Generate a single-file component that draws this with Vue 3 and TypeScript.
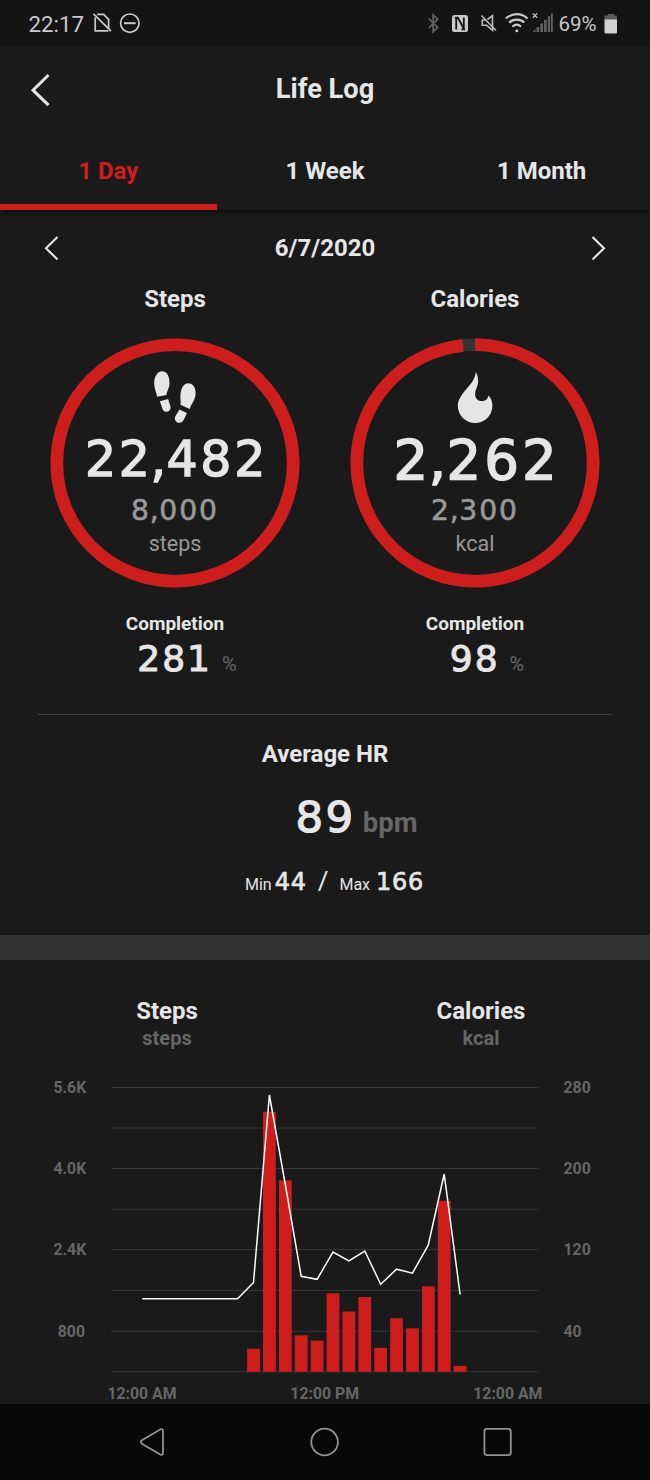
<script setup lang="ts">
interface Metric {
  title: string
  chars: string[]
  goal: string[]
  unit: string
  ratio: number
  percent: string
  kind: 'steps' | 'calories'
}

const metrics: Metric[] = [
  { title: 'Steps', chars: ['22', ',', '482'], goal: ['8', ',', '000'], unit: 'steps', ratio: 1, percent: '281', kind: 'steps' },
  { title: 'Calories', chars: ['2', ',', '262'], goal: ['2', ',', '300'], unit: 'kcal', ratio: 2262 / 2300, percent: '98', kind: 'calories' },
]
const radius = 118.2
const circumference = 2 * Math.PI * radius

const tabs = ['1 Day', '1 Week', '1 Month']

const gridLines = [27.5, 68, 108.5, 149.2, 189.5, 230.5, 271.2, 311.8]
const leftLabels = ['5.6K', '4.0K', '2.4K', '800']
const rightLabels = ['280', '200', '120', '40']
const pitch = 15.89
const firstHour = 142.3
const baseline = 311.8
// Bar heights by hour, starting at 7 AM
const bars = [23, 260, 191.5, 36.5, 31.3, 78.5, 60.3, 74.8, 24, 53.6, 43.5, 85.5, 171, 6]
const lineY = [238.7, 238.7, 238.7, 238.7, 238.7, 238.7, 238.7, 222.5, 35, 124.5, 216.3, 219.3, 192, 201, 191, 224.3, 209.2, 213.2, 185, 114, 234.5]
const linePoints = lineY.map((y, i) => `${(firstHour + i * pitch).toFixed(1)},${y}`).join(' ')
</script>

<template>
  <main class="screen">
    <div class="status">
      <span class="clock">22:17</span>
      <svg class="left-icons" width="50" height="24" viewBox="0 0 50 24">
        <g fill="none" stroke="#c9c9c9" stroke-width="1.7">
          <path d="M5.2 2.3h6.4l5 5v9M3.2 5.5v13.3h13.2M1.5 1.8L19 19.2" />
          <circle cx="37.8" cy="11.2" r="9.2" /><path d="M32 11.2h11.6" stroke-width="2" />
        </g>
      </svg>
      <span class="grow"></span>
      <svg class="right-icons" width="128" height="24" viewBox="427 12 128 24">
        <path d="M429.7 18.5l9 9-4.5 4.2V15l4.5 4.3-9 8.7" fill="none" stroke="#666" stroke-width="1.7" />
        <rect x="453" y="15" width="16" height="17" rx="2.5" fill="#c9c9c9" />
        <path d="M457.2 29.500V19l2-.8 5.600 10.400V17.500M455.800 17.700h3.600M462.500 29.300h3.600" fill="none" stroke="#141414" stroke-width="1.8" />
        <g fill="none" stroke="#bdbdbd" stroke-width="1.6">
          <path d="M482.4 15.5l14.6 15M488.500 19.5l5-3.8v11M483.3 19.8v5.5h4.3l6 5v-3.5M483.3 20h4" />
        </g>
        <g fill="none" stroke="#c9c9c9" stroke-width="2.1">
          <path d="M506.8 18.6c6.4-6 15.5-6 21.8 0M510.1 22.6c4.4-4 10.9-4 15.2 0M513.4 26.7c2.6-2.4 6-2.4 8.6 0" />
        </g>
        <circle cx="517.8" cy="30.8" r="1.5" fill="#c9c9c9" />
        <path d="M533.8 13.4l4.4 4.4M538.2 13.4l-4.4 4.4" stroke="#c9c9c9" stroke-width="1.3" />
        <path d="M533.5 32l3-3v3zM537.500 27h2.6v5h-2.6zM541.300 23.5h2.6V32h-2.6zM545.100 19.7h2.6V32h-2.6zM548.900 16h2.200V32h-2.200zM552 13.5h1.800V32H552z" fill="#636363" />
      </svg>
      <span class="battery-text">69%</span>
      <svg class="battery" width="14" height="22" viewBox="0 0 14 22">
        <path d="M4 1h6v1.5h3V7H.5V2.5H4z" fill="#595959" /><path d="M.5 6.5H13v13a1 1 0 0 1-1 1H1.500a1 1 0 0 1-1-1z" fill="#d2d2d2" />
      </svg>
    </div>

    <header class="header">
      <svg class="back" width="22" height="36" viewBox="0 0 22 36"><path d="M18.500 3L3 18.200l15.500 15" fill="none" stroke="#e6e6e6" stroke-width="3" /></svg>
      <h1>Life Log</h1>
      <span class="back"></span>
    </header>

    <nav class="tabs">
      <button v-for="(tab, i) in tabs" :key="tab" class="tab" :class="{ active: i === 0 }">{{ tab }}</button>
    </nav>

    <div class="date-row">
      <svg width="18" height="28" viewBox="0 0 18 28"><path d="M15.500 3L4 14.300l11.500 11.200" fill="none" stroke="#e6e6e6" stroke-width="2.100" /></svg>
      <strong>6/7/2020</strong>
      <svg width="18" height="28" viewBox="0 0 18 28"><path d="M2.500 3L14 14.300 2.500 25.500" fill="none" stroke="#e6e6e6" stroke-width="2.100" /></svg>
    </div>

    <section class="metrics">
      <article v-for="m in metrics" :key="m.title" class="metric" :class="m.kind">
        <h2>{{ m.title }}</h2>
        <div class="ring">
          <svg class="ring-track" width="250" height="250" viewBox="0 0 250 250">
            <circle cx="125" cy="125" :r="radius" fill="none" stroke="#333" stroke-width="12.600" />
            <circle cx="125" cy="125" :r="radius" fill="none" stroke="#cd1d1d" stroke-width="12.600"
              :stroke-dasharray="`${m.ratio * circumference} ${circumference}`" transform="rotate(-90 125 125)" />
          </svg>
          <svg v-if="m.kind === 'steps'" class="ring-icon" width="44" height="53" viewBox="0 0 44 53" fill="#e6e6e6">
            <path d="M9.200.3C4 .3 1.200 6 1.200 12.500c0 5.500 2.400 9.500 3 13.300l9.300-1.700c.3-4 3-7 3-12C16.500 5.500 14.300.3 9.200.3z" />
            <path d="M6.800 30.200l8.300-2.200c.6 3.500 2.500 5.400 2.500 8.600 0 2.600-1.700 4.200-4 4.200-4.800 0-4.400-5.600-6.800-10.600z" />
            <path d="M35.200 12.200c4.800 0 7.700 4.400 7.400 10.800-.4 6.400-4.300 9.800-5.900 15l-9.300-4.300c.8-3.800-.5-6.300.2-11.300.8-5.800 3.200-10.200 7.600-10.200z" />
            <path d="M26.200 38.500l7.800 3.400c-2.500 4.500-3.300 9.800-7.700 9.800-2.500 0-4.600-2-4.400-4.500.2-3 2.800-4.700 4.300-8.700z" />
          </svg>
          <svg v-else class="ring-icon" width="44" height="53" viewBox="0 0 44 53" fill="#e6e6e6">
            <path d="M22.800 1c-.5 7.200-5.200 12.300-9.800 17.600C8.500 23.800 4.800 29 4.800 34.800a17.300 17.300 0 0 0 34.600 0c0-4.300-1.500-8-3.900-10.400-.8 3.700-3.100 5.700-6.300 5.700-4 0-7.100-2.700-7.100-6.700 0-5 3-7.500 3-13.400 0-3.300-.7-6.300-2.300-9z" />
          </svg>
          <p class="value num"><span v-for="(c, i) in m.chars" :key="i" :class="{ comma: c === ',' }">{{ c }}</span></p>
          <p class="goal num"><span v-for="(c, i) in m.goal" :key="i" :class="{ comma: c === ',' }">{{ c }}</span></p>
          <p class="unit">{{ m.unit }}</p>
        </div>
        <h3>Completion</h3>
        <p class="percent"><span class="num">{{ m.percent }}</span><small>%</small></p>
      </article>
    </section>

    <section class="heart">
      <h2>Average HR</h2>
      <p class="rate"><span class="num">89</span><b>bpm</b></p>
      <p class="range"><span>Min</span><span class="num">44</span><i>/</i><span>Max</span><span class="num max">166</span></p>
    </section>

    <div class="band"></div>

    <section class="history">
      <div class="legend">
        <div class="legend-steps"><h2>Steps</h2><p>steps</p></div>
        <div class="legend-calories"><h2>Calories</h2><p>kcal</p></div>
      </div>
      <svg class="chart" width="650" height="344" viewBox="0 0 650 344">
        <line v-for="y in gridLines" :key="y" x1="111.500" x2="538.500" :y1="y" :y2="y" stroke="#353535" stroke-width="1.100" />
        <rect v-for="(h, i) in bars" :key="i" :x="firstHour + (i + 7) * pitch - 6.4" :y="baseline - h" width="12.800" :height="h" fill="#cd1d1d" />
        <polyline :points="linePoints" fill="none" stroke="#fff" stroke-width="1.500" />
        <g class="axis">
          <text v-for="(t, i) in leftLabels" :key="t" :x="i === 3 ? 85 : 86.2" :y="32.600 + i * 81.300" text-anchor="end">{{ t }}</text>
          <text v-for="(t, i) in rightLabels" :key="t" x="563.500" :y="32.600 + i * 81.300">{{ t }}</text>
          <text x="142" y="338.700" text-anchor="middle">12:00 AM</text>
          <text x="324.700" y="338.700" text-anchor="middle">12:00 PM</text>
          <text x="507.800" y="338.700" text-anchor="middle">12:00 AM</text>
        </g>
      </svg>
    </section>

    <footer class="system-nav">
      <svg width="32" height="32" viewBox="0 0 32 32"><path d="M24.200 3.400L5.900 14.300c-1.400.9-1.400 2.500 0 3.400l18.300 10.900c1.400.8 2.800 0 2.800-1.600V5c0-1.600-1.400-2.400-2.800-1.600z" /></svg>
      <svg width="32" height="32" viewBox="0 0 32 32"><circle cx="15.600" cy="16" r="13.300" /></svg>
      <svg width="32" height="32" viewBox="0 0 32 32"><rect x="2.400" y="2.900" width="26.400" height="26.200" rx="2.500" /></svg>
    </footer>
  </main>
</template>

<style>
body { background: #1a1a1a; }
</style>

<style scoped>
.screen { width: 650px; height: 1480px; overflow: hidden; background: #1a1a1a; color: #e6e6e6; font-family: Roboto, "Liberation Sans", sans-serif; }
h1, h2, h3, p { margin: 0; }
.num { font-family: "DejaVu Sans", sans-serif; letter-spacing: .055em; -webkit-text-stroke: .028em currentColor; }
.comma { margin: 0 -.045em; }

.status { display: flex; align-items: center; height: 46px; padding: 2px 32.5px 0 28.5px; background: #141414; color: #c9c9c9; box-sizing: border-box; }
.clock { font-size: 22.3px; line-height: 44px; }
.left-icons { margin-left: 8px; }
.grow { flex: 1; }
.battery-text { margin-left: 4px; font-size: 20.5px; line-height: 44px; }
.battery { margin-left: 7px; }

.header { display: flex; align-items: center; justify-content: space-between; height: 88px; padding: 0 30px; }
.back { width: 22px; }
h1 { font-size: 27.2px; font-weight: 700; line-height: 86px; padding-bottom: 2px; }

.tabs { display: grid; grid-template-columns: repeat(3, 1fr); height: 76px; box-shadow: 0 4px 4px -2px rgba(0, 0, 0, .6); }
.tab { padding: 3px 0 0; border: 0; border-bottom: 6px solid transparent; background: none; color: #e6e6e6; font: 700 24px/64px Roboto, sans-serif; }
.tab.active { color: #cd1d1d; border-bottom-color: #cd1d1d; }

.date-row { display: flex; align-items: center; justify-content: space-between; height: 76px; padding: 0 42px; }
.date-row strong { font-size: 24px; font-weight: 700; line-height: 28px; padding-bottom: 1px; }

.metrics { display: grid; grid-template-columns: 300px 300px; height: 428px; margin: 0 25px; }
.metric { display: flex; flex-direction: column; align-items: center; }
h2 { font-size: 24px; font-weight: 700; line-height: 27px; }
.ring { position: relative; display: flex; flex-direction: column; align-items: center; width: 250px; height: 250px; margin-top: 25px; }
.ring-track { position: absolute; top: 0; left: 0; }
.ring-icon { margin-top: 33px; flex: none; }
.value { position: relative; margin-top: 5px; height: 62px; padding-left: 3px; font-size: 49px; line-height: 62px; white-space: nowrap; }
.calories .value { font-size: 54.5px; }
.goal { position: relative; margin-top: 5px; height: 30px; font-size: 28.2px; line-height: 30px; color: #999; letter-spacing: .07em; -webkit-text-stroke-width: .6px; }
.unit { position: relative; margin-top: 4px; font-size: 21.5px; line-height: 28px; color: #999; }
h3 { margin-top: 23px; font-size: 19px; font-weight: 700; line-height: 26px; }
.percent { display: flex; align-items: baseline; height: 44px; padding-left: 24px; line-height: 44px; }
.percent .num { font-size: 36px; }
.percent small { margin-left: 10px; font-size: 20px; color: #666; }

.heart { display: flex; flex-direction: column; align-items: center; height: 220px; margin: 0 38px; border-top: 1px solid #414141; box-sizing: border-box; }
.heart h2 { margin-top: 26px; }
.rate { display: flex; align-items: baseline; height: 50px; margin: 24px 0 0 63px; line-height: 50px; }
.rate .num { font-size: 43.5px; }
.rate b { margin-left: 7px; font-size: 27.5px; font-weight: 700; color: #666; }
.range { display: flex; align-items: baseline; margin: 21px 0 0 19px; font-size: 16px; line-height: 36px; }
.range .num { margin-left: 3px; font-size: 24px; letter-spacing: .03em; }
.range i { margin: 0 11px; font-size: 26px; font-style: normal; }
.range .max { margin-left: 6px; }

.band { height: 25px; background: #333; margin-top: .500px; }
.legend { display: flex; height: 100.500px; padding: 38px 0 0; box-sizing: border-box; text-align: center; }
.legend > div { width: 90px; }
.legend-steps { margin-left: 122px; }
.legend-calories { margin-left: 224px; }
.legend p { font-size: 20px; font-weight: 700; line-height: 26px; color: #666; }
.chart { display: block; }
.axis text { fill: #666; font: 700 15.8px Roboto, sans-serif; }

.system-nav { display: flex; align-items: center; justify-content: center; gap: 141px; height: 76px; background: #080808; }
.system-nav svg { fill: none; stroke: #929292; stroke-width: 1.800; }
</style>
